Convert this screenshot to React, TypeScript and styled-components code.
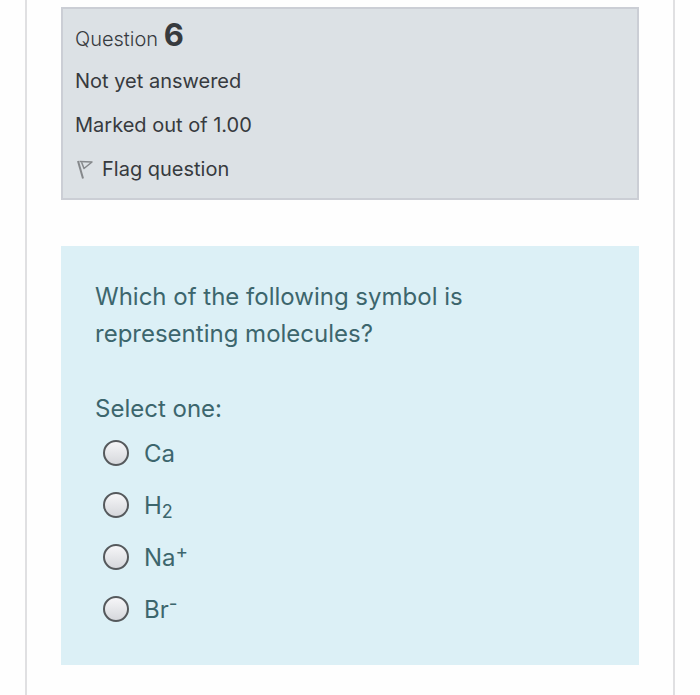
import React, { useState } from "react";
import styled, { createGlobalStyle } from "styled-components";

const GlobalStyle = createGlobalStyle`
  *, *::before, *::after { box-sizing: border-box; }
  body {
    margin: 0;
    background: #fefefe;
    font-family: Inter, "Liberation Sans", sans-serif;
  }
`;

const Page = styled.main`
  min-height: 100vh;
  margin: 0 25px;
  padding: 7px 34px 30px;
  border: solid #e0e0e2;
  border-width: 0 2px;
`;

const Info = styled.section`
  display: flex;
  flex-direction: column;
  align-items: flex-start;
  gap: 14px;
  padding: 11px 12px 14px;
  border: 2px solid #cbced5;
  background: #dce1e5;
  color: #373a3e;
  font-size: 20px;
  line-height: 30px;
`;

const Heading = styled.h1`
  margin: 0 0 -2px;
  font-size: 20px;
  font-weight: 300;
  line-height: 30px;
`;

const Number = styled.span`
  font-size: 31px;
  font-weight: 700;
  line-height: 30px;
`;

const InfoLine = styled.p`
  margin: 0;
`;

const FlagButton = styled.button`
  display: flex;
  align-items: center;
  gap: 8px;
  padding: 0 0 0 2px;
  border: 0;
  background: none;
  color: inherit;
  font: inherit;
  cursor: pointer;
`;

const Question = styled.form`
  margin-top: 46px;
  padding: 32px 34px 30px;
  background: #dcf0f6;
  color: #3c666d;
  font-size: 24px;
  line-height: 37px;
`;

const Prompt = styled.p`
  max-width: 420px;
  margin: 0 0 38px;
`;

const Answers = styled.fieldset`
  min-width: 0;
  margin: 0;
  padding: 0;
  border: 0;
`;

const Legend = styled.legend`
  padding: 0;
`;

const Option = styled.label`
  display: flex;
  align-items: center;
  gap: 15px;
  height: 52px;
  padding-left: 8px;
  cursor: pointer;
`;

const Radio = styled.input`
  appearance: none;
  flex: none;
  width: 26px;
  height: 26px;
  margin: 0;
  border: 2px solid #55595c;
  border-radius: 50%;
  background: linear-gradient(#f6f6f8, #d6d8dc);

  &:checked {
    background: radial-gradient(circle, #44484b 5px, #e8e9ec 6px);
  }
`;

const Sub = styled.sub`
  font-size: 18px;
  line-height: 0;
  vertical-align: -4px;
`;

const Sup = styled.sup`
  font-size: 19px;
  line-height: 0;
  vertical-align: 8px;
`;

const FlagIcon = () => (
  <svg width="17" height="20" viewBox="0 0 17 20" fill="none" stroke="#85888b" aria-hidden="true">
    <path d="M1 2L6 19.5" strokeWidth="2" />
    <path d="M2.5 2.5L15 3L7 9.5L4.5 3" strokeWidth="1.5" strokeLinejoin="round" />
  </svg>
);

const options = [
  { id: "ca", label: <>Ca</> },
  { id: "h2", label: <>H<Sub>2</Sub></> },
  { id: "na", label: <>Na<Sup>+</Sup></> },
  { id: "br", label: <>Br<Sup>-</Sup></> },
];

export default function App() {
  const [answer, setAnswer] = useState("");

  return (
    <>
      <GlobalStyle />
      <Page>
        <Info>
          <Heading>
            Question <Number>6</Number>
          </Heading>
          <InfoLine>Not yet answered</InfoLine>
          <InfoLine>Marked out of 1.00</InfoLine>
          <FlagButton type="button">
            <FlagIcon />
            Flag question
          </FlagButton>
        </Info>
        <Question>
          <Prompt>Which of the following symbol is representing molecules?</Prompt>
          <Answers>
            <Legend>Select one:</Legend>
            {options.map(({ id, label }) => (
              <Option key={id} htmlFor={id}>
                <Radio
                  type="radio"
                  id={id}
                  name="answer"
                  checked={answer === id}
                  onChange={() => setAnswer(id)}
                />
                <span>{label}</span>
              </Option>
            ))}
          </Answers>
        </Question>
      </Page>
    </>
  );
}
